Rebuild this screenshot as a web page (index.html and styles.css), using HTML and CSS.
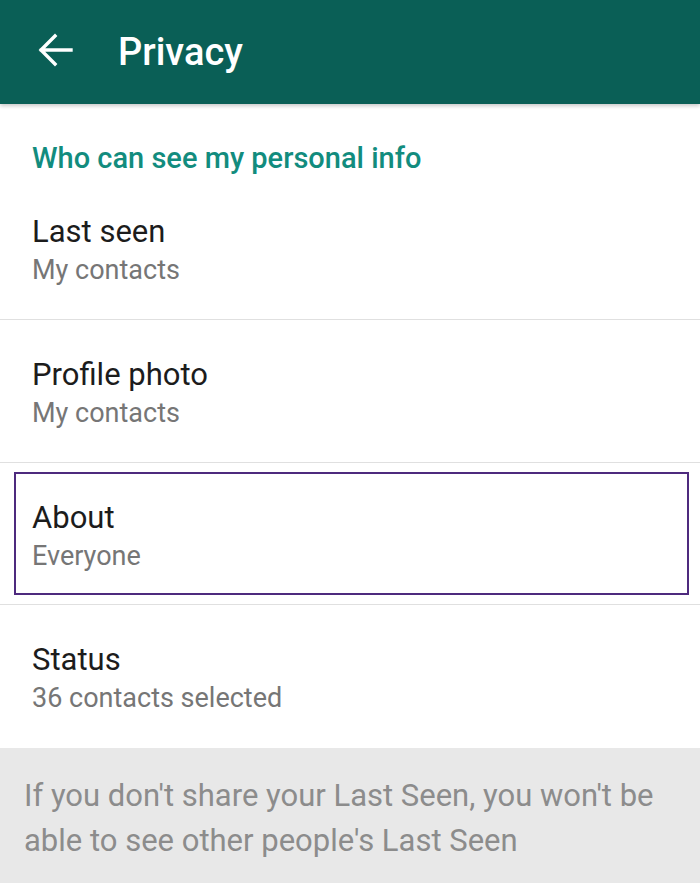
FILE: index.html
```html
<!DOCTYPE html>
<html lang="en">
<head>
<meta charset="utf-8">
<title>Privacy</title>
<link rel="stylesheet" href="styles.css">
</head>
<body>
<header class="appbar">
  <svg class="back" width="48" height="48" viewBox="0 0 24 24" aria-hidden="true">
    <path d="M20 12H5.2M12 5l-7 7 7 7" fill="none" stroke="#ffffff" stroke-width="1.7" stroke-linecap="square" stroke-linejoin="miter"/>
  </svg>
  <h1 class="title">Privacy</h1>
</header>
<main>
  <div class="section-title">Who can see my personal info</div>
  <div class="row first">
    <div class="row-title">Last seen</div>
    <div class="row-sub">My contacts</div>
  </div>
  <div class="row">
    <div class="row-title">Profile photo</div>
    <div class="row-sub">My contacts</div>
  </div>
  <div class="row focus-row">
    <div class="focus-box">
      <div class="row-title">About</div>
      <div class="row-sub">Everyone</div>
    </div>
  </div>
  <div class="row last">
    <div class="row-title">Status</div>
    <div class="row-sub">36 contacts selected</div>
  </div>
  <div class="note">If you don't share your Last Seen, you won't be able to see other people's Last Seen</div>
</main>
</body>
</html>
```

FILE: styles.css
```css
* { box-sizing: border-box; }
html, body { margin: 0; padding: 0; background: #ffffff; }
body {
  width: 700px;
  height: 893px;
  overflow: hidden;
  font-family: Roboto, "Noto Sans", "Liberation Sans", sans-serif;
}
.appbar {
  position: relative;
  z-index: 1;
  height: 104px;
  background: #0a5f56;
  display: flex;
  align-items: center;
  padding-left: 31px;
  gap: 39px;
  box-shadow: 0 2px 4px rgba(0, 0, 0, 0.22);
}
.back { display: block; margin-bottom: 4px; }
.title {
  margin: 0;
  color: #ffffff;
  font-size: 38px;
  font-weight: 500;
  line-height: 104px;
}
.section-title {
  padding: 36px 32px 0;
  font-size: 29px;
  font-weight: 500;
  line-height: 36px;
  color: #128c7e;
}
.row {
  padding: 35px 32px 31px;
  border-top: 1px solid #e0e0e0;
}
.row.first { border-top: none; padding-top: 36px; }
.row.last { padding-bottom: 32px; }
.row-title {
  font-size: 31px;
  line-height: 40px;
  color: #1c1c1c;
}
.row-sub {
  font-size: 27px;
  line-height: 36px;
  color: #767676;
}
.focus-row { padding: 9px 11px 9px 14px; }
.focus-box {
  border: 2px solid #4e2a7e;
  padding: 24px 16px 19px;
}
.note {
  background: #e8e8e8;
  padding: 25px 24px 20px;
  font-size: 31px;
  line-height: 45px;
  color: #8c8c8c;
}
```
